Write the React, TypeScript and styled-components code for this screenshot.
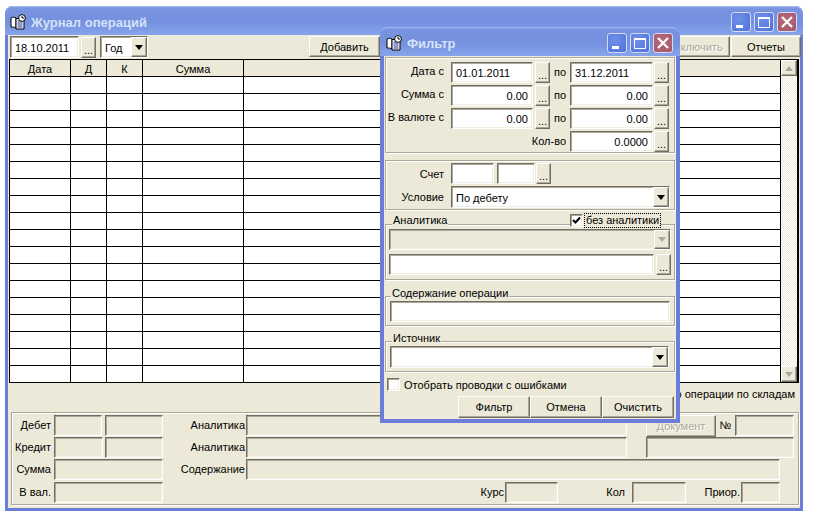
import React from "react";
import styled, { createGlobalStyle } from "styled-components";

const Global = createGlobalStyle`
  html, body { margin: 0; padding: 0; background: #fff; }
  body { font-family: "Liberation Sans", Arial, sans-serif; font-size: 11px; color: #000; }
  * { box-sizing: border-box; }
`;

const Desktop = styled.div`
  position: relative;
  width: 819px;
  height: 531px;
  background: #fff;
  overflow: hidden;
`;

const Win = styled.section<{ $x: number; $y: number; $w: number; $h: number; $b: number }>`
  position: absolute;
  left: ${(p) => p.$x}px;
  top: ${(p) => p.$y}px;
  width: ${(p) => p.$w}px;
  height: ${(p) => p.$h}px;
  display: flex;
  flex-direction: column;
  background: #6a7ddb;
  border-radius: 8px 8px 0 0;
  padding: 0 ${(p) => p.$b}px ${(p) => p.$b}px;
`;

const TitleBar = styled.header<{ $pad: number }>`
  flex: none;
  height: 29px;
  margin: 0 -${(p) => p.$pad}px;
  padding: 3px ${(p) => p.$pad + 3}px 0 ${(p) => p.$pad + 2}px;
  display: flex;
  align-items: center;
  border-radius: 8px 8px 0 0;
  background: linear-gradient(180deg, #8aa4ea 0, #7893e0 3px, #7490de 55%, #86a5ec 100%);
  box-shadow: inset 0 1px 0 #9db4f0;
`;

const TitleText = styled.h1`
  margin: 1px 0 0 4px;
  flex: 1;
  font-family: "Liberation Sans", Arial, sans-serif;
  font-size: 13px;
  font-weight: 700;
  line-height: 16px;
  color: #d6e2f8;
`;

const CapBtn = styled.div<{ $close?: boolean }>`
  width: 20px;
  height: 20px;
  margin-left: 3px;
  flex: none;
  border-radius: 3px;
  border: 1px solid #d4dcf4;
  display: flex;
  align-items: center;
  justify-content: center;
  background: ${(p) =>
    p.$close
      ? "radial-gradient(circle at 40% 40%, #b56a78, #a8566c)"
      : "radial-gradient(circle at 35% 35%, #6f90e8, #4f72dc)"};
`;

const Client = styled.div`
  flex: 1;
  min-height: 0;
  background: #ece9d8;
  display: flex;
  flex-direction: column;
`;

const Toolbar = styled.div`
  flex: none;
  height: 24px;
  padding: 1px 0 1px 2px;
  display: flex;
  align-items: flex-start;
`;

const Inset = `
  border: 1px solid;
  border-color: #716f64 #ffffff #ffffff #716f64;
  box-shadow: inset 1px 1px 0 #aca899, inset -1px -1px 0 #f1efe2;
`;

const Input = styled.div<{ $w?: number; $h?: number; $ml?: number; $align?: string; $off?: boolean }>`
  ${Inset}
  flex: ${(p) => (p.$w ? "none" : "1")};
  width: ${(p) => (p.$w ? p.$w + "px" : "auto")};
  height: ${(p) => p.$h ?? 21}px;
  margin-left: ${(p) => p.$ml ?? 0}px;
  padding: 1px 4px 0;
  background: ${(p) => (p.$off ? "#ece9d8" : "#fff")};
  display: flex;
  align-items: center;
  justify-content: ${(p) => p.$align ?? "flex-start"};
  position: relative;
  white-space: nowrap;
  line-height: 14px;
`;

const Raised = `
  background: #ece9d8;
  border: 1px solid;
  border-color: #ffffff #716f64 #716f64 #ffffff;
  box-shadow: inset -1px -1px 0 #aca899;
`;

const Btn = styled.div<{ $w: number; $h?: number; $ml?: number; $off?: boolean; $my?: number }>`
  ${Raised}
  flex: none;
  width: ${(p) => p.$w}px;
  height: ${(p) => p.$h ?? 21}px;
  margin-left: ${(p) => p.$ml ?? 0}px;
  margin-top: ${(p) => p.$my ?? 0}px;
  display: flex;
  align-items: center;
  justify-content: center;
  line-height: 14px;
  white-space: nowrap;
  color: ${(p) => (p.$off ? "#aca899" : "#000")};
  text-shadow: ${(p) => (p.$off ? "1px 1px 0 #fff" : "none")};
`;

const Dots = styled(Btn)`
  align-items: flex-end;
  padding-bottom: 2px;
  line-height: 10px;
`;

const Arrow = styled.i<{ $off?: boolean; $up?: boolean }>`
  width: 0;
  height: 0;
  display: block;
  border-left: 4px solid transparent;
  border-right: 4px solid transparent;
  ${(p) => (p.$up ? "border-bottom" : "border-top")}: 5px solid ${(p) => (p.$off ? "#aca899" : "#000")};
`;

const ComboBtn = styled.div`
  ${Raised}
  position: absolute;
  right: 0;
  top: 0;
  bottom: 0;
  width: 16px;
  display: flex;
  align-items: center;
  justify-content: center;
`;

const Grid = styled.div`
  flex: none;
  margin-left: 1px;
  width: 790px;
  height: 324px;
  display: flex;
  border: 1px solid #000;
  border-right-width: 2px;
  border-bottom: 1px solid #000;
`;

const GridBody = styled.div`
  flex: 1;
  min-width: 0;
  display: flex;
  flex-direction: column;
  background: #fff;
`;

const GridRow = styled.div<{ $head?: boolean }>`
  flex: none;
  height: 17px;
  display: grid;
  grid-template-columns: 61px 36px 36px 101px 1fr;
  background: ${(p) => (p.$head ? "#ece9d8" : "#fff")};
  border-bottom: 1px solid #000;
  &:last-child { height: 16px; border-bottom: 0; }
`;

const GridCell = styled.div`
  border-right: 1px solid #000;
  text-align: center;
  padding-top: 1px;
  line-height: 17px;
  overflow: hidden;
  &:last-child { border-right: 0; }
`;

const ScrollBar = styled.div`
  flex: none;
  width: 17px;
  display: flex;
  flex-direction: column;
  border-left: 1px solid #000;
  background: repeating-conic-gradient(#ffffff 0 25%, #ece9d8 0 50%) 0 0 / 2px 2px;
  justify-content: space-between;
`;

const ScrollBtn = styled.div`
  ${Raised}
  width: 16px;
  height: 16px;
  display: flex;
  align-items: center;
  justify-content: center;
`;

const StatusLine = styled.div`
  flex: none;
  height: 29px;
  padding: 3px 5px 0 0;
  text-align: right;
  line-height: 16px;
`;

const Group = styled.div<{ $mt?: number; $h: number; $pad?: string; $gap?: number }>`
  position: relative;
  flex: none;
  height: ${(p) => p.$h}px;
  margin-top: ${(p) => p.$mt ?? 0}px;
  padding: ${(p) => p.$pad ?? "0"};
  border: 1px solid #aca899;
  box-shadow: 1px 1px 0 #fff, inset 1px 1px 0 #fff;
  display: flex;
  flex-direction: column;
  gap: ${(p) => p.$gap ?? 0}px;
`;

const BottomGroup = styled(Group)`
  margin-left: 3px;
  width: 788px;
`;

const Row = styled.div<{ $h?: number; $mt?: number; $ml?: number }>`
  flex: none;
  display: flex;
  align-items: flex-start;
  height: ${(p) => p.$h ?? 21}px;
  margin-top: ${(p) => p.$mt ?? 0}px;
  margin-left: ${(p) => p.$ml ?? 0}px;
`;

const Label = styled.label<{ $w: number; $pr?: number; $center?: boolean; $lh?: number }>`
  flex: none;
  width: ${(p) => p.$w}px;
  padding-right: ${(p) => p.$pr ?? 1}px;
  text-align: ${(p) => (p.$center ? "center" : "right")};
  line-height: ${(p) => p.$lh ?? 21}px;
  white-space: nowrap;
`;

const Spacer = styled.div<{ $w: number }>`
  flex: none;
  width: ${(p) => p.$w}px;
`;

const DialogClient = styled(Client)`
  padding: 1px 0 0 1px;
`;

const DlgGroup = styled(Group)`
  width: 290px;
`;

const Legend = styled.span<{ $x: number; $y?: number }>`
  position: absolute;
  left: ${(p) => p.$x}px;
  top: ${(p) => p.$y ?? -11}px;
  padding: 0 1px;
  background: #ece9d8;
  line-height: 15px;
  white-space: nowrap;
`;

const CheckBox = styled.span`
  ${Inset}
  flex: none;
  width: 13px;
  height: 13px;
  background: #fff;
  display: flex;
  align-items: center;
  justify-content: center;
`;

const CheckWrap = styled.div`
  position: absolute;
  left: 184px;
  top: -11px;
  display: flex;
  align-items: center;
  gap: 2px;
  background: #ece9d8;
`;

const FocusText = styled.span`
  outline: 1px dotted #000;
  line-height: 13px;
  padding: 0 1px;
  white-space: nowrap;
`;

const CheckRow = styled.div`
  flex: none;
  height: 13px;
  margin: 6px 0 0 2px;
  display: flex;
  align-items: center;
  gap: 4px;
  line-height: 14px;
  white-space: nowrap;
`;

const DlgButtons = styled.div`
  flex: none;
  margin: 5px 0 0 73px;
  display: flex;
`;

const BookIcon = () => (
  <svg width="17" height="16" viewBox="0 0 17 16" aria-hidden="true">
    <path d="M1 13V4c2-1 3-1 5 0v10c-2-1-3-1-5-1z" fill="#fff" stroke="#000" />
    <path d="M6 4.5h8V15H6z" fill="#fff" stroke="#000" />
    <path d="M7.5 7h5M7.5 9h5M7.5 11h5M7.5 13h5" stroke="#1c2f9c" />
    <circle cx="12" cy="4" r="3.4" fill="#fff" stroke="#000" />
    <path d="M12 2v2h2" stroke="#000" fill="none" />
  </svg>
);

const MinGlyph = () => (
  <svg width="14" height="14" viewBox="0 0 14 14" aria-hidden="true">
    <rect x="2" y="10" width="7" height="3" fill="#fff" />
  </svg>
);
const MaxGlyph = () => (
  <svg width="14" height="14" viewBox="0 0 14 14" aria-hidden="true">
    <path d="M1.5 3.5h11v9h-11z" fill="none" stroke="#fff" />
    <rect x="1" y="2" width="12" height="2" fill="#fff" />
  </svg>
);
const CloseGlyph = () => (
  <svg width="14" height="14" viewBox="0 0 14 14" aria-hidden="true">
    <path d="M2 2l10 10M12 2L2 12" stroke="#fff" strokeWidth="2.2" />
  </svg>
);
const Tick = () => (
  <svg width="9" height="9" viewBox="0 0 9 9" aria-hidden="true">
    <path d="M1 4l2.5 2.5L8 1.5" fill="none" stroke="#000" strokeWidth="2" />
  </svg>
);

const Caption: React.FC<{ title: string; pad: number }> = ({ title, pad }) => (
  <TitleBar $pad={pad}>
    <BookIcon />
    <TitleText>{title}</TitleText>
    <CapBtn><MinGlyph /></CapBtn>
    <CapBtn><MaxGlyph /></CapBtn>
    <CapBtn $close><CloseGlyph /></CapBtn>
  </TitleBar>
);

const Combo: React.FC<{ text?: string; w?: number; h?: number; off?: boolean; ml?: number }> = ({ text, w, h, off, ml }) => (
  <Input $w={w} $h={h} $off={off} $ml={ml}>
    {text}
    <ComboBtn><Arrow $off={off} /></ComboBtn>
  </Input>
);

const Range: React.FC<{ label: string; a: string; b: string; align?: string }> = ({ label, a, b, align }) => (
  <Row>
    <Label $w={65} $pr={7} $lh={19}>{label}</Label>
    <Input $w={82} $align={align}>{a}</Input>
    <Dots $w={15} $ml={2}>...</Dots>
    <Label $w={20} $center $pr={0} $lh={20}>по</Label>
    <Input $w={83} $align={align}>{b}</Input>
    <Dots $w={15} $ml={1}>...</Dots>
  </Row>
);

const rows = Array.from({ length: 18 }, (_, i) => i);

export default function App() {
  return (
    <Desktop>
      <Global />
      <Win $x={5} $y={6} $w={798} $h={505} $b={3}>
        <Caption title="Журнал операций" pad={3} />
        <Client>
          <Toolbar>
            <Input $w={69} $h={22}>18.10.2011</Input>
            <Dots $w={15} $ml={2} $h={21} $my={1}>...</Dots>
            <Combo text="Год" w={48} h={22} ml={4} />
            <Btn $w={71} $ml={161} $h={21}>Добавить</Btn>
            <Spacer $w={280} />
            <Btn $w={70} $h={21} $off>Исключить</Btn>
            <Btn $w={70} $ml={1} $h={21}>Отчеты</Btn>
          </Toolbar>
          <Grid>
            <GridBody>
              <GridRow $head>
                <GridCell>Дата</GridCell>
                <GridCell>Д</GridCell>
                <GridCell>К</GridCell>
                <GridCell>Сумма</GridCell>
                <GridCell />
              </GridRow>
              {rows.map((r) => (
                <GridRow key={r}>
                  <GridCell />
                  <GridCell />
                  <GridCell />
                  <GridCell />
                  <GridCell />
                </GridRow>
              ))}
            </GridBody>
            <ScrollBar>
              <ScrollBtn><Arrow $off $up /></ScrollBtn>
              <ScrollBtn><Arrow $off /></ScrollBtn>
            </ScrollBar>
          </Grid>
          <StatusLine>Только операции по складам</StatusLine>
          <BottomGroup $h={93} $pad="2px 0 0 1px" $gap={1}>
            <Row>
              <Label $w={41} $pr={3}>Дебет</Label>
              <Input $w={48} $off />
              <Input $w={58} $ml={3} $off />
              <Label $w={83}>Аналитика</Label>
              <Input $w={381} $off />
              <Spacer $w={19} />
              <Btn $w={70} $h={22} $off>Документ</Btn>
              <Label $w={19} $center $pr={0}>№</Label>
              <Input $w={59} $off />
            </Row>
            <Row>
              <Label $w={41} $pr={3}>Кредит</Label>
              <Input $w={49} $off />
              <Input $w={58} $ml={2} $off />
              <Label $w={83}>Аналитика</Label>
              <Input $w={381} $off />
              <Spacer $w={19} />
              <Input $w={148} $off />
            </Row>
            <Row>
              <Label $w={41} $pr={3}>Сумма</Label>
              <Input $w={109} $off />
              <Label $w={83}>Содержание</Label>
              <Input $w={534} $off />
            </Row>
            <Row $mt={1}>
              <Label $w={41} $pr={3}>В вал.</Label>
              <Input $w={109} $off />
              <Label $w={342}>Курс</Label>
              <Input $w={53} $off />
              <Label $w={74} $pr={7}>Кол</Label>
              <Input $w={54} $off />
              <Label $w={55}>Приор.</Label>
              <Input $w={39} $off />
            </Row>
          </BottomGroup>
        </Client>
      </Win>

      <Win $x={380} $y={27} $w={300} $h={396} $b={4}>
        <Caption title="Фильтр" pad={4} />
        <DialogClient>
          <DlgGroup $h={96} $pad="4px 0 0 0" $gap={2}>
            <Range label="Дата с" a="01.01.2011" b="31.12.2011" />
            <Range label="Сумма с" a="0.00" b="0.00" align="flex-end" />
            <Range label="В валюте с" a="0.00" b="0.00" align="flex-end" />
            <Row>
              <Label $w={184} $pr={4} $lh={20}>Кол-во</Label>
              <Input $w={83} $align="flex-end">0.0000</Input>
              <Dots $w={15} $ml={1}>...</Dots>
            </Row>
          </DlgGroup>

          <DlgGroup $mt={7} $h={50} $pad="2px 0 0 0" $gap={2}>
            <Row>
              <Label $w={65} $pr={7} $lh={23}>Счет</Label>
              <Input $w={43} />
              <Input $w={38} $ml={3} />
              <Dots $w={15} $ml={1}>...</Dots>
            </Row>
            <Row $h={22}>
              <Label $w={65} $pr={7} $lh={23}>Условие</Label>
              <Combo text="По дебету" w={219} h={22} />
            </Row>
          </DlgGroup>

          <DlgGroup $mt={14} $h={56} $pad="4px 0 0 3px" $gap={4}>
            <Legend $x={6} $y={-12}>Аналитика</Legend>
            <CheckWrap>
              <CheckBox><Tick /></CheckBox>
              <FocusText>без аналитики</FocusText>
            </CheckWrap>
            <Combo w={282} h={21} off />
            <Row>
              <Input $w={265} />
              <Dots $w={15} $ml={2}>...</Dots>
            </Row>
          </DlgGroup>

          <DlgGroup $mt={16} $h={30} $pad="4px 0 0 4px">
            <Legend $x={5}>Содержание операции</Legend>
            <Input $w={280} />
          </DlgGroup>

          <DlgGroup $mt={15} $h={31} $pad="4px 0 0 4px">
            <Legend $x={6}>Источник</Legend>
            <Combo w={279} h={22} />
          </DlgGroup>

          <CheckRow>
            <CheckBox />
            Отобрать проводки с ошибками
          </CheckRow>

          <DlgButtons>
            <Btn $w={72} $h={22}>Фильтр</Btn>
            <Btn $w={72} $h={22}>Отмена</Btn>
            <Btn $w={72} $h={22}>Очистить</Btn>
          </DlgButtons>
        </DialogClient>
      </Win>
    </Desktop>
  );
}
